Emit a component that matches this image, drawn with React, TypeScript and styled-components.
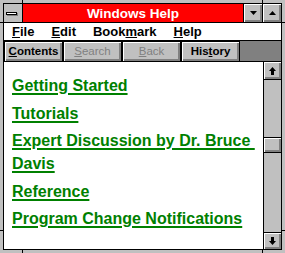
import styled, { createGlobalStyle } from "styled-components";

const Global = createGlobalStyle`
  html, body { margin: 0; padding: 0; background: #fff; }
  * { box-sizing: border-box; }
`;

const Frame = styled.div`
  position: relative;
  width: 285px;
  height: 253px;
  padding: 3px;
  background: #c0c0c0;
  font-family: "Liberation Sans", Arial, sans-serif;
`;
const VTick = styled.div<{ $x: number; $bottom?: boolean }>`
  position: absolute;
  left: ${(p) => p.$x}px;
  ${(p) => (p.$bottom ? "bottom: 0;" : "top: 0;")}
  width: 1px;
  height: 3px;
  background: #000;
`;
const HTick = styled.div<{ $y: number; $right?: boolean }>`
  position: absolute;
  top: ${(p) => p.$y}px;
  ${(p) => (p.$right ? "right: 0;" : "left: 0;")}
  width: 3px;
  height: 1px;
  background: #000;
`;
const Win = styled.div`
  height: 100%;
  border: 1px solid #000;
  background: #fff;
  display: flex;
  flex-direction: column;
`;

const TitleBar = styled.div`
  display: flex;
  height: 19px;
  border-bottom: 1px solid #000;
`;
const SysBox = styled.div`
  width: 19px;
  border-right: 1px solid #000;
  background: #c0c0c0;
  display: flex;
  align-items: center;
  padding-left: 2px;
`;
const Dash = styled.div`
  width: 11px;
  height: 3px;
  border: 1px solid #000;
  background: #fff;
  box-shadow: 1px 1px 0 #808080;
`;
const Caption = styled.div`
  flex: 1;
  background: #ff0000;
  color: #fff;
  font-weight: bold;
  font-size: 13.5px;
  display: flex;
  align-items: center;
  justify-content: center;
`;
const CapButton = styled.div`
  width: 19px;
  border-left: 1px solid #000;
  background: #c0c0c0;
  box-shadow: inset 1px 1px 0 #fff, inset -2px -2px 0 #808080;
  display: flex;
  align-items: center;
  justify-content: center;
  padding-bottom: 1px;
`;

const MenuBar = styled.div`
  display: flex;
  gap: 17px;
  height: 18px;
  padding-left: 8px;
  border-bottom: 1px solid #000;
  font-size: 13px;
  font-weight: bold;
  line-height: 17px;
  color: #000;
`;
const Acc = styled.span`
  text-decoration: underline;
  text-decoration-thickness: 1px;
  text-underline-offset: 1px;
`;

const Toolbar = styled.div`
  display: flex;
  height: 21px;
  background: #808080;
  border-bottom: 1px solid #000;
`;
const TButton = styled.div<{ $off?: boolean }>`
  width: 59px;
  height: 20px;
  border: 1px solid #000;
  border-bottom: none;
  background: #c0c0c0;
  box-shadow: inset 1px 1px 0 #fff, inset -2px -2px 0 #808080;
  display: flex;
  align-items: center;
  justify-content: center;
  font-size: 11.5px;
  font-weight: bold;
  color: ${(p) => (p.$off ? "#808080" : "#000")};
  font-weight: ${(p) => (p.$off ? "normal" : "bold")};
  padding-bottom: 1px;
`;

const Body = styled.div`
  flex: 1;
  display: flex;
  min-height: 0;
`;
const Topics = styled.div`
  flex: 1;
  padding: 12px 8px 0;
  display: flex;
  flex-direction: column;
  align-items: flex-start;
  gap: 4.5px;
`;
const Topic = styled.a`
  color: #008000;
  font-size: 16px;
  font-weight: bold;
  line-height: 23px;
  text-decoration: underline;
  text-decoration-thickness: 2px;
  text-underline-offset: 2px;
  white-space: nowrap;
`;

const Scroll = styled.div`
  width: 19px;
  border-left: 1px solid #000;
  background: #c0c0c0;
  display: flex;
  flex-direction: column;
`;
const Arrow = styled.div<{ $down?: boolean }>`
  height: ${(p) => (p.$down ? 17 : 18)}px;
  ${(p) => (p.$down ? "border-top" : "border-bottom")}: 1px solid #000;
  background: #c0c0c0;
  box-shadow: inset 1px 1px 0 #fff, inset -2px -2px 0 #808080;
  display: flex;
  align-items: center;
  justify-content: center;
  padding-left: 1px;
`;
const Track = styled.div`
  flex: 1;
`;
const Thumb = styled.div<{ $top: number }>`
  margin-top: ${(p) => p.$top}px;
  height: 16px;
  border-top: 1px solid #000;
  border-bottom: 1px solid #000;
  background: #c0c0c0;
  box-shadow: inset 1px 1px 0 #fff, inset -2px -2px 0 #808080;
`;

const Tri = ({ up }: { up?: boolean }) => (
  <svg width="7" height="4" viewBox="0 0 7 4">
    <path d={up ? "M3.5 0 L7 4 L0 4 Z" : "M0 0 L7 0 L3.5 4 Z"} fill="#000" />
  </svg>
);

const ScrollArrow = ({ up }: { up?: boolean }) => (
  <svg width="7" height="8" viewBox="0 0 7 8" style={{ transform: up ? "none" : "rotate(180deg)" }}>
    <path d="M3.5 0 L7 4 L5 4 L5 8 L2 8 L2 4 L0 4 Z" fill="#000" />
  </svg>
);

export default function App() {
  return (
    <>
      <Global />
      <Frame>
        <VTick $x={22} />
        <VTick $x={262} />
        <VTick $x={22} $bottom />
        <VTick $x={262} $bottom />
        <HTick $y={22} />
        <HTick $y={230} />
        <HTick $y={22} $right />
        <HTick $y={230} $right />
        <Win>
          <TitleBar>
            <SysBox>
              <Dash />
            </SysBox>
            <Caption>Windows Help</Caption>
            <CapButton>
              <Tri />
            </CapButton>
            <CapButton>
              <Tri up />
            </CapButton>
          </TitleBar>
          <MenuBar>
            <span>
              <Acc>F</Acc>ile
            </span>
            <span>
              <Acc>E</Acc>dit
            </span>
            <span>
              Book<Acc>m</Acc>ark
            </span>
            <span>
              <Acc>H</Acc>elp
            </span>
          </MenuBar>
          <Toolbar>
            <TButton>
              <Acc>C</Acc>ontents
            </TButton>
            <TButton $off>
              <Acc>S</Acc>earch
            </TButton>
            <TButton $off>
              <Acc>B</Acc>ack
            </TButton>
            <TButton>
              His<Acc>t</Acc>ory
            </TButton>
          </Toolbar>
          <Body>
            <Topics>
              <Topic>Getting Started</Topic>
              <Topic>Tutorials</Topic>
              <Topic>
                Expert Discussion by Dr. Bruce&nbsp;
                <br />
                Davis
              </Topic>
              <Topic>Reference</Topic>
              <Topic>Program Change Notifications</Topic>
            </Topics>
            <Scroll>
              <Arrow>
                <ScrollArrow up />
              </Arrow>
              <Track>
                <Thumb $top={57} />
              </Track>
              <Arrow $down>
                <ScrollArrow />
              </Arrow>
            </Scroll>
          </Body>
        </Win>
      </Frame>
    </>
  );
}
